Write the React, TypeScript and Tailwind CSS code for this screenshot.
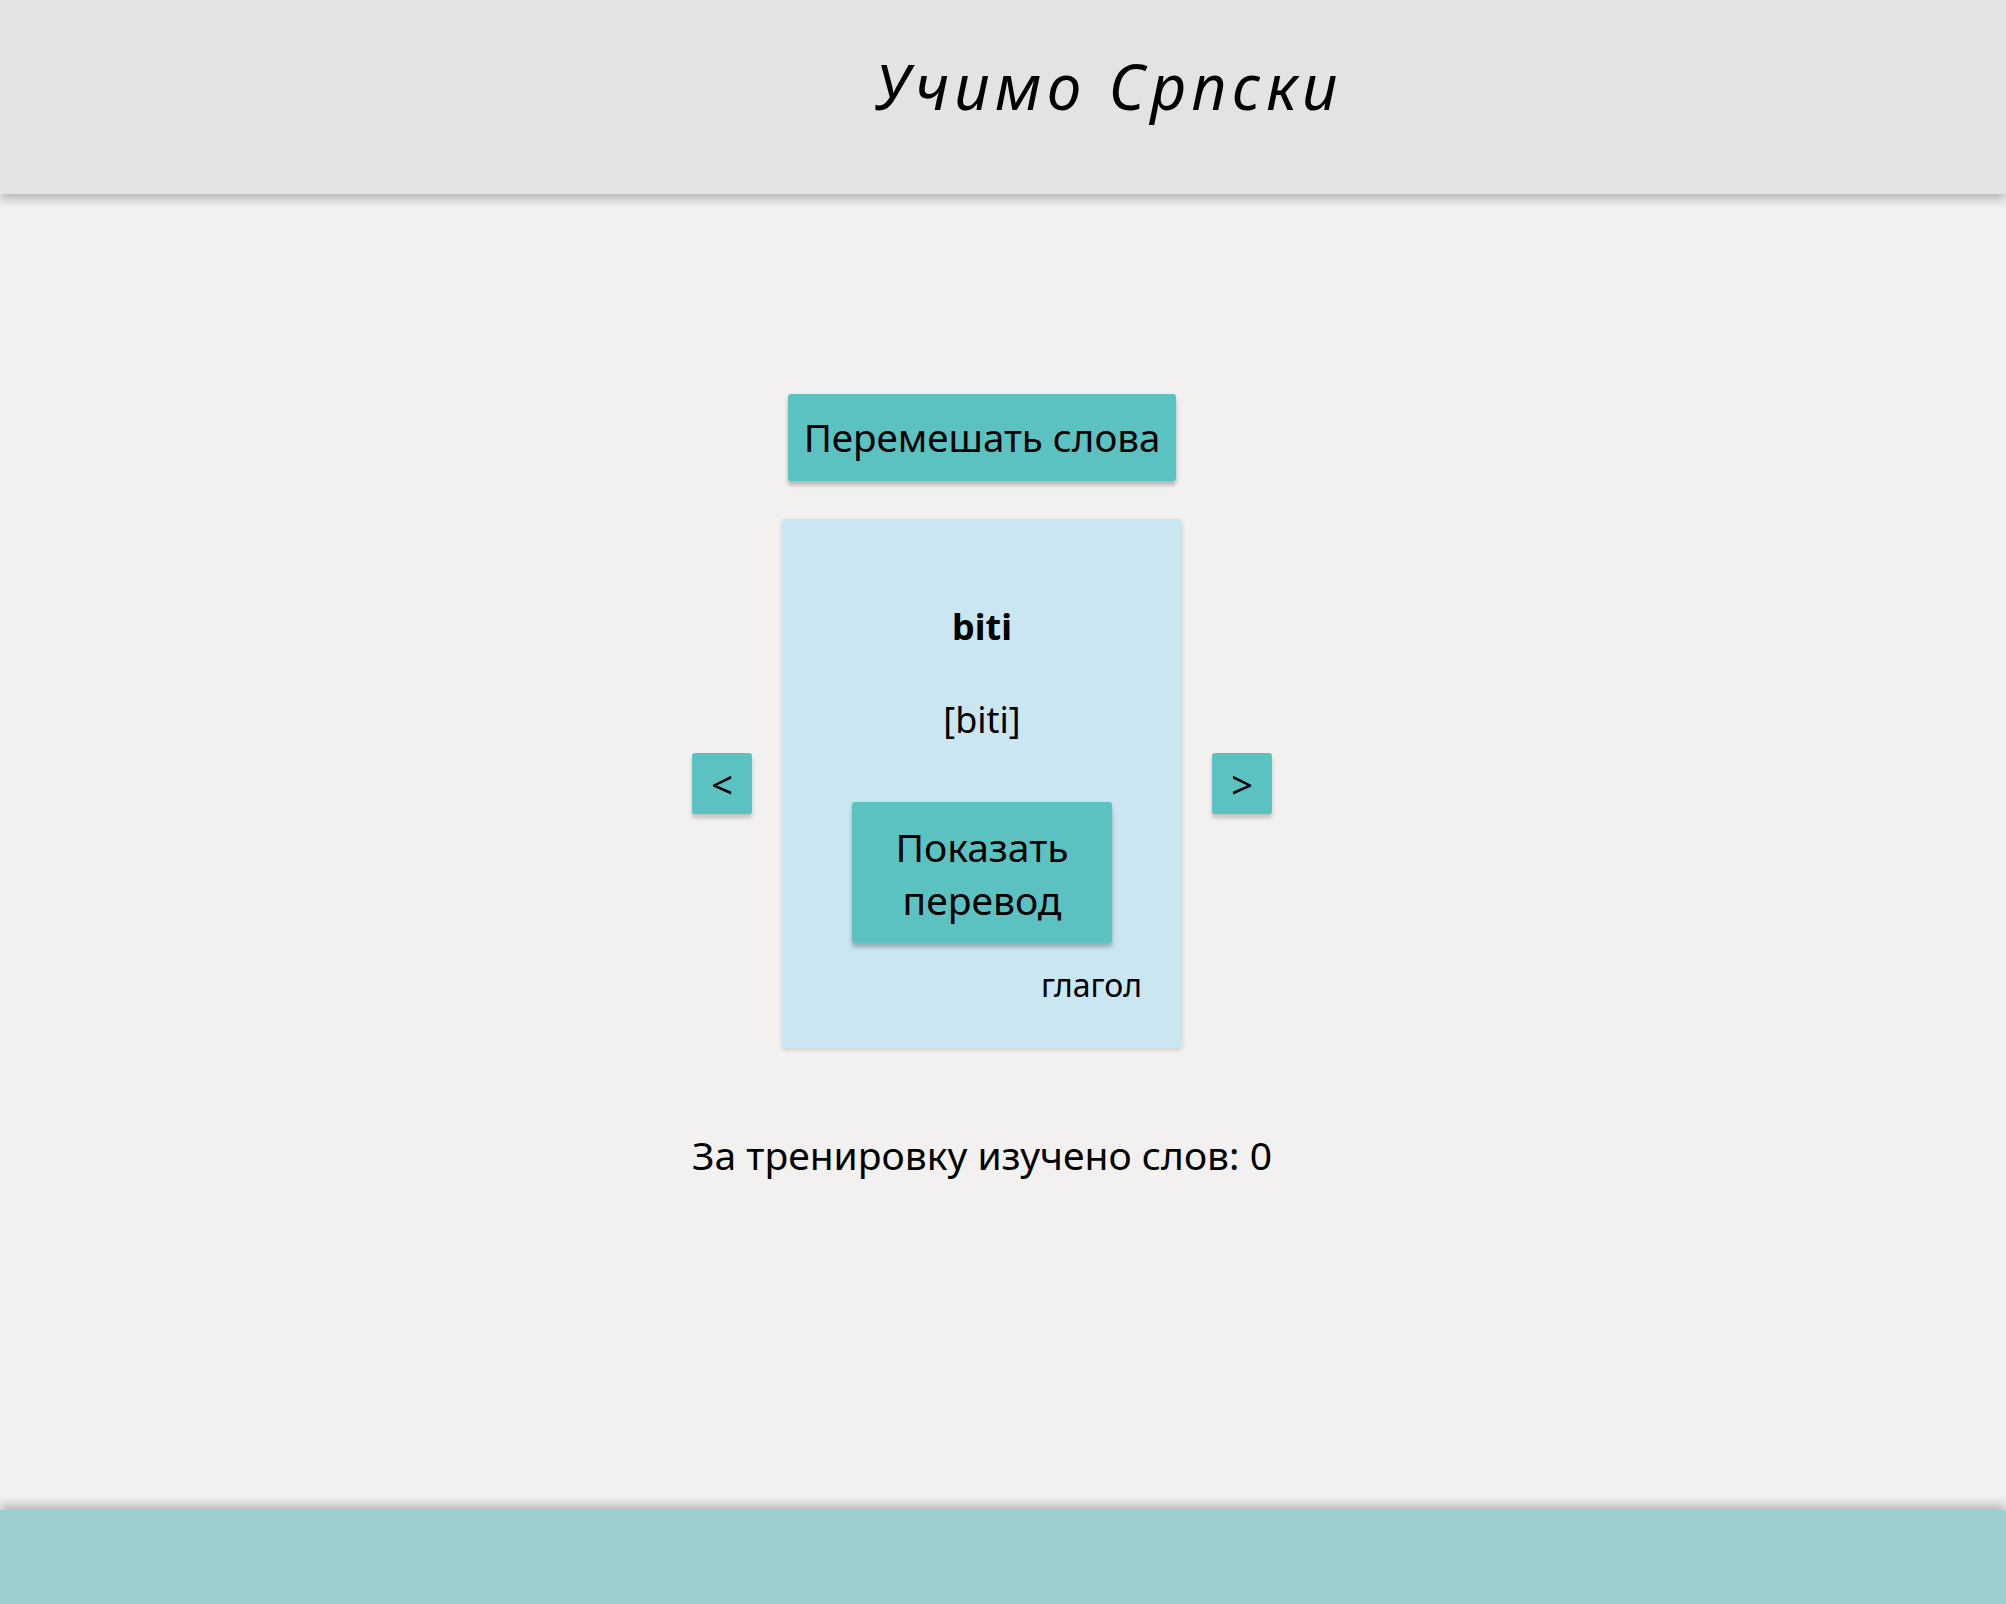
import { useState } from "react";

const words = [
  { word: "biti", transcription: "[biti]", translation: "быть", type: "глагол" },
];

export default function App() {
  const [index, setIndex] = useState(0);
  const [shown, setShown] = useState(false);
  const [learned] = useState(0);
  const current = words[index];

  const prev = () => {
    setShown(false);
    setIndex((i) => (i - 1 + words.length) % words.length);
  };
  const next = () => {
    setShown(false);
    setIndex((i) => (i + 1) % words.length);
  };

  return (
    <div className="min-h-screen flex flex-col bg-[#f2f1ef] text-black font-['Noto_Sans',sans-serif]">
      <header className="h-[194px] shrink-0 flex items-center justify-center pl-[212px] pb-[22px] bg-[#e3e3e3] shadow-[0_5px_10px_rgba(0,0,0,0.25)] relative z-10">
        <h1 className="text-[62px] italic tracking-[0.09em] leading-none">Учимо Српски</h1>
      </header>

      <main className="flex-1 flex flex-col items-center pt-[200px] pr-[42px]">
        <button className="bg-[#5bc2c1] rounded-[3px] px-[16px] h-[87px] text-[38.5px] shadow-[0_4px_4px_rgba(0,0,0,0.25)]">
          Перемешать слова
        </button>

        <div className="mt-[38px] flex items-center gap-[30px]">
          <button
            onClick={prev}
            className="w-[60px] h-[61px] bg-[#5bc2c1] rounded-[3px] text-[38px] leading-none shadow-[0_4px_4px_rgba(0,0,0,0.2)]"
          >
            &lt;
          </button>

          <div className="w-[400px] h-[529px] bg-[#c9e6f1] rounded-[4px] shadow-[0_2px_4px_rgba(0,0,0,0.15)] flex flex-col items-center pt-[84px] px-[40px]">
            <div className="text-[36px] font-bold leading-[48px]">{current.word}</div>
            <div className="mt-[45px] text-[36px] leading-[48px]">{current.transcription}</div>
            {shown ? (
              <div className="mt-[58px] h-[141px] flex items-center text-[38px]">{current.translation}</div>
            ) : (
              <button
                onClick={() => setShown(true)}
                className="mt-[58px] w-[260px] h-[141px] bg-[#5bc2c1] rounded-[3px] text-[39px] leading-[53px] shadow-[0_4px_4px_rgba(0,0,0,0.25)]"
              >
                Показать
                <br />
                перевод
              </button>
            )}
            <div className="self-end mt-[22px] text-[32px] leading-[40px]">{current.type}</div>
          </div>

          <button
            onClick={next}
            className="w-[60px] h-[61px] bg-[#5bc2c1] rounded-[3px] text-[38px] leading-none shadow-[0_4px_4px_rgba(0,0,0,0.2)]"
          >
            &gt;
          </button>
        </div>

        <p className="mt-[83px] text-[39px] leading-[48px]">За тренировку изучено слов: {learned}</p>
      </main>

      <footer className="h-[94px] shrink-0 bg-[#9dcfcf] shadow-[0_-5px_10px_rgba(0,0,0,0.25)]" />
    </div>
  );
}
